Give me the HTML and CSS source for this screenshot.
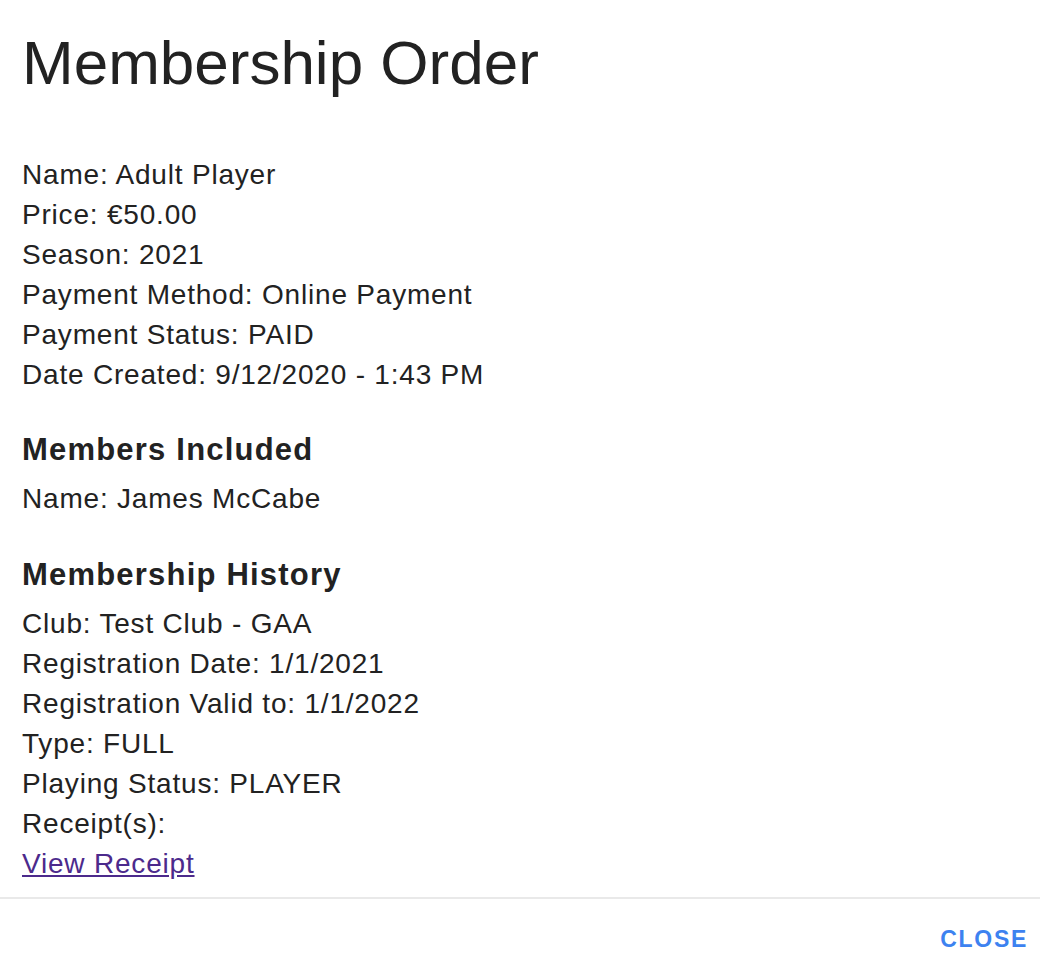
FILE: index.html
```html
<!DOCTYPE html>
<html>
<head>
<meta charset="utf-8">
<link rel="stylesheet" href="styles.css">
</head>
<body>
<div class="dialog">
  <div class="content">
    <h1 class="title">Membership Order</h1>
    <div class="block first">
      <div class="line">Name: Adult Player</div>
      <div class="line">Price: €50.00</div>
      <div class="line">Season: 2021</div>
      <div class="line">Payment Method: Online Payment</div>
      <div class="line">Payment Status: PAID</div>
      <div class="line">Date Created: 9/12/2020 - 1:43 PM</div>
    </div>
    <h2 class="heading">Members Included</h2>
    <div class="block">
      <div class="line">Name: James McCabe</div>
    </div>
    <h2 class="heading wide">Membership History</h2>
    <div class="block">
      <div class="line">Club: Test Club - GAA</div>
      <div class="line">Registration Date: 1/1/2021</div>
      <div class="line">Registration Valid to: 1/1/2022</div>
      <div class="line">Type: FULL</div>
      <div class="line">Playing Status: PLAYER</div>
      <div class="line">Receipt(s):</div>
      <div class="line"><a class="link" href="#">View Receipt</a></div>
    </div>
  </div>
  <div class="actions">
    <button class="close">CLOSE</button>
  </div>
</div>
</body>
</html>
```
FILE: styles.css
```css
html, body {
  margin: 0;
  padding: 0;
  background: #ffffff;
}
body {
  font-family: "Liberation Sans", Arial, sans-serif;
  color: #222222;
}
.dialog {
  width: 1040px;
  height: 980px;
  display: flex;
  flex-direction: column;
}
.content {
  padding: 0 22px;
  border-bottom: 2px solid #e9e9e9;
  box-sizing: border-box;
  height: 899px;
  flex: none;
}
.title {
  margin: 0;
  padding-top: 27px;
  font-size: 62px;
  font-weight: 400;
  line-height: 72px;
}
.block.first {
  margin-top: 56px;
}
.line {
  font-size: 28px;
  line-height: 40px;
  letter-spacing: 0.8px;
}
.heading {
  margin: 0;
  margin-top: 35px;
  font-size: 31px;
  font-weight: 700;
  line-height: 40px;
  letter-spacing: 1.2px;
}
.heading.wide {
  margin-top: 36px;
}
.block {
  margin-top: 9px;
}
.link {
  color: #4c2a8c;
  text-decoration: underline;
}
.actions {
  display: flex;
  justify-content: flex-end;
  align-items: center;
  flex: 1;
  padding-right: 12px;
}
.close {
  background: none;
  border: none;
  font-family: "Liberation Sans", Arial, sans-serif;
  font-weight: 700;
  font-size: 23px;
  letter-spacing: 1.7px;
  color: #3d82f0;
  padding: 0;
  cursor: pointer;
}
```
